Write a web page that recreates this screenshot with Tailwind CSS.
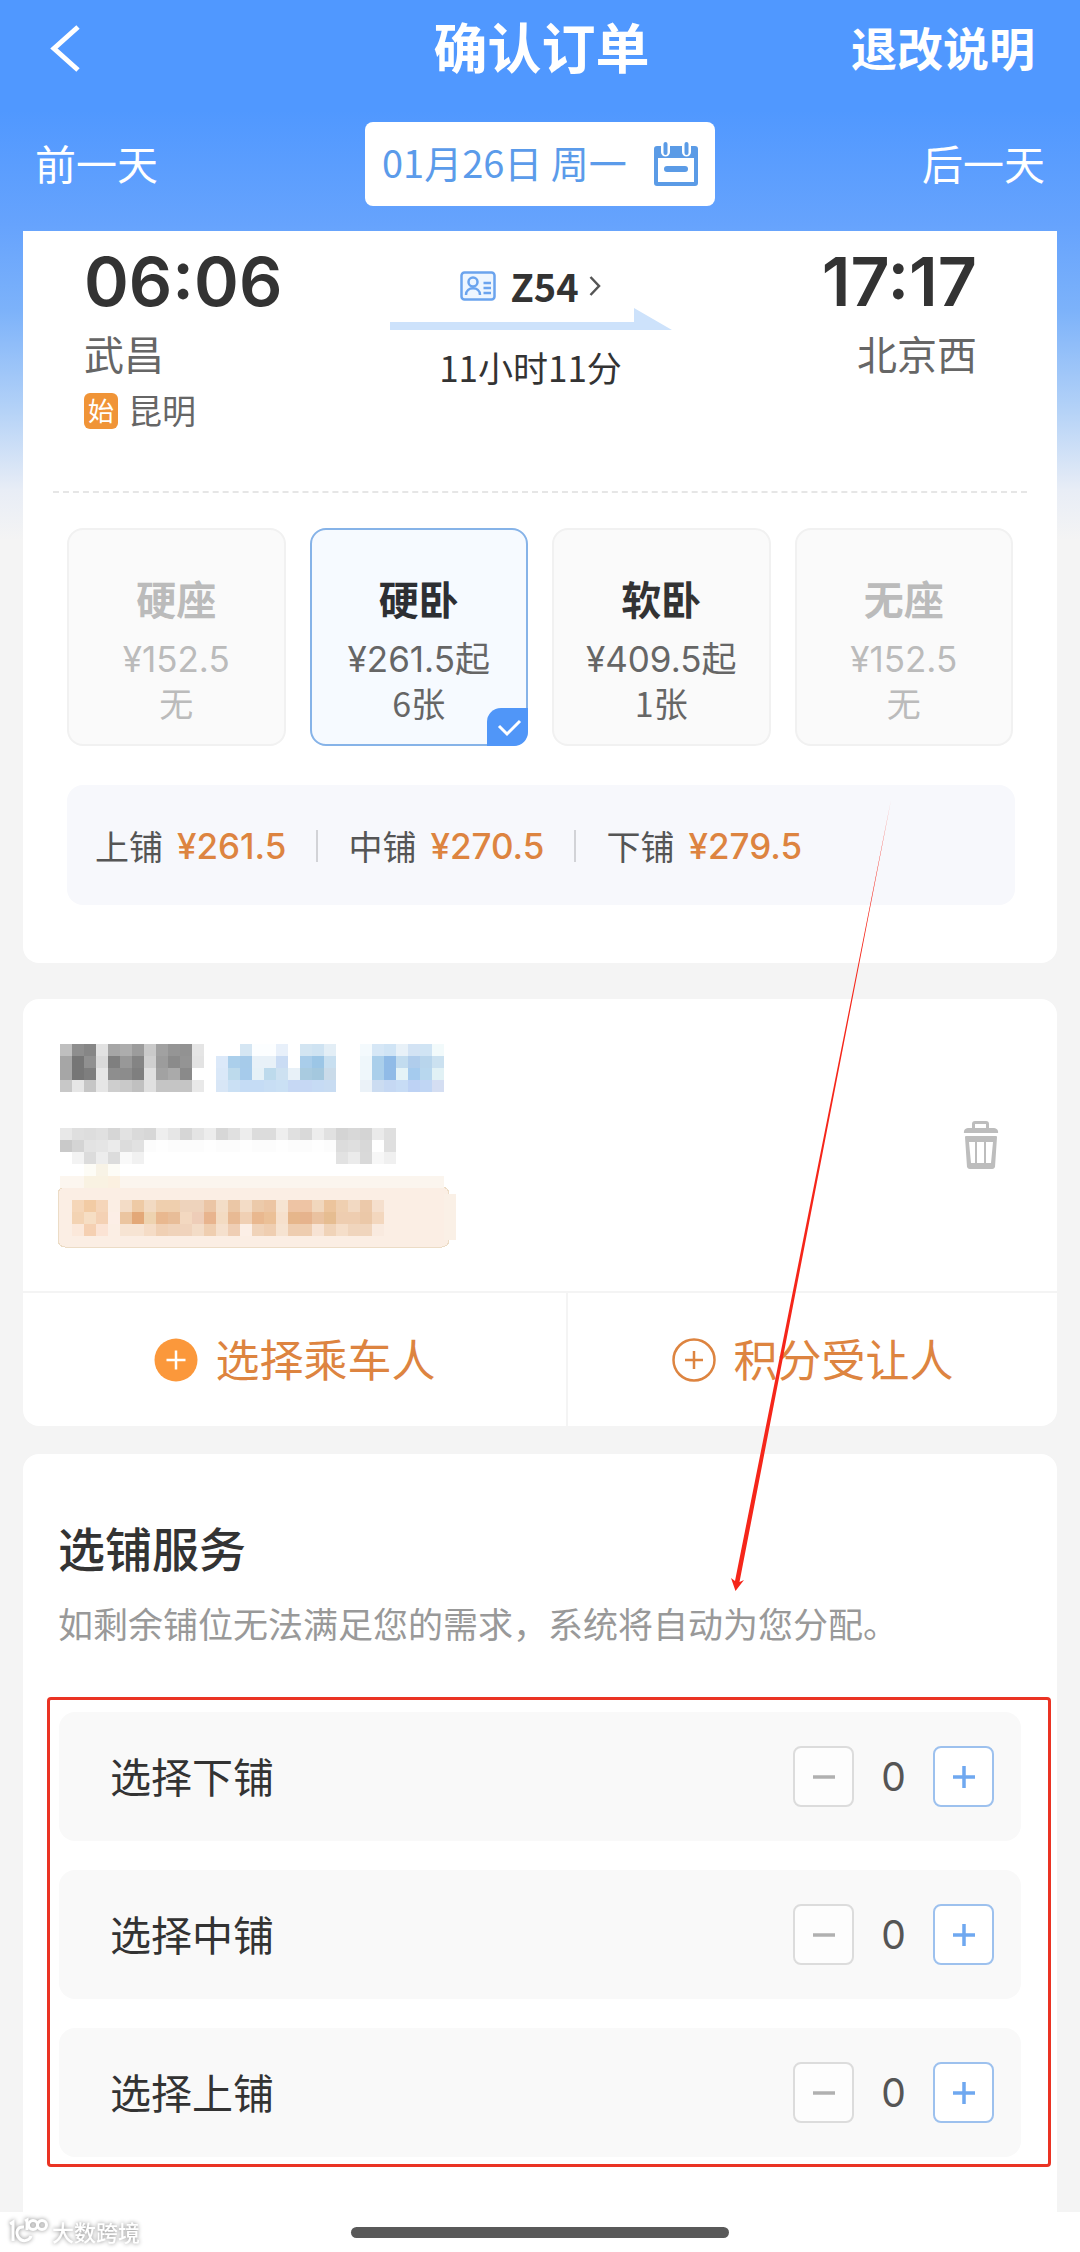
<!DOCTYPE html>
<html lang="zh-CN">
<head>
<meta charset="utf-8">
<meta name="viewport" content="width=device-width, initial-scale=1">
<title>确认订单</title>
<script src="https://cdn.jsdelivr.net/npm/@tailwindcss/browser@4"></script>
</head>
<body class="bg-white font-['Noto_Sans_CJK_SC',sans-serif] text-[#333]">
<div class="relative overflow-hidden">
<div class="bg-[#f4f4f4]">
  <div class="bg-[linear-gradient(to_bottom,#5098ff_0px,#5098ff_110px,#66a3fd_225px,#7cb2fa_310px,#b4d2f7_410px,#e8edf6_490px,#f4f4f4_540px)]">
  <header class="text-white">
    <div class="grid h-[96px] grid-cols-3 items-center pr-[45px] pl-[48px]">
      <button aria-label="返回" class="justify-self-start">
        <svg class="h-[48px] w-[36px]" viewBox="0 0 36 48" fill="none" stroke="currentColor" stroke-width="5"><path d="M30 3L6 24.500L30 46"/></svg>
      </button>
      <h1 class="justify-self-center pb-1 text-[54px] leading-[64px] font-bold whitespace-nowrap">确认订单</h1>
      <a href="#" class="justify-self-end pb-1 text-[46px] leading-[64px] font-bold whitespace-nowrap">退改说明</a>
    </div>
    <div class="grid grid-cols-3 items-center px-[35px] pt-[26px] pb-[25px]">
      <button class="justify-self-start pb-1 text-[41px] leading-[60px]">前一天</button>
      <button class="flex h-[84px] w-[350px] items-center justify-between justify-self-center rounded-lg bg-white px-[17px] text-[38px] leading-[60px] whitespace-nowrap text-[#5b9bea]">
        <span class="pb-1">01月26日 周一</span>
        <svg class="h-[44px] w-[44px]" viewBox="0 0 44 44"><path fill="#5b9be6" fill-rule="evenodd" d="M3 4H7V10a4.500 4.500 0 0 0 9 0V4H28V10a4.500 4.500 0 0 0 9 0V4H41a3 3 0 0 1 3 3V41a3 3 0 0 1-3 3H3a3 3 0 0 1-3-3V7a3 3 0 0 1 3-3ZM4 16V40H40V16Z"/><path d="M11.500 2v9M32.500 2v9" stroke="#5b9be6" stroke-width="4" stroke-linecap="round"/><path d="M13 27H31" stroke="#5b9be6" stroke-width="6" stroke-linecap="round"/></svg>
      </button>
      <button class="justify-self-end pb-1 text-[41px] leading-[60px]">后一天</button>
    </div>
  </header>

  <section class="mx-[23px] rounded-b-2xl bg-white px-[30px] pb-[58px]">
    <div class="grid grid-cols-[1fr_auto_1fr] border-b-2 border-dashed border-[#e6e6e6] pt-[8px] pr-[50px] pb-[54px] pl-[31px]">
      <div>
        <div class="font-[Inter,sans-serif] text-[68px] leading-[84px] font-semibold">06:06</div>
        <div class="text-[40px] leading-[60px] text-[#666]">武昌</div>
        <div class="mt-[2px] flex items-center gap-[10px] text-[34px] leading-[52px] text-[#666]"><span class="flex h-[36px] w-[34px] items-center justify-center rounded-md bg-[#f09437] pb-[2px] text-[26px] leading-[34px] text-white">始</span><span class="pb-[2px] leading-[50px]">昆明</span></div>
      </div>
      <div class="flex flex-col items-center pt-[25px]">
        <button class="flex items-center gap-[14px] text-[38px] leading-[44px] font-bold">
          <svg class="h-[30px] w-[36px]" viewBox="0 0 36 30" fill="none" stroke="#6ba4ee" stroke-width="2.500"><rect x="1.500" y="1.500" width="33" height="27" rx="3" fill="#eef6ff"/><circle cx="13" cy="11" r="4.500"/><path d="M6 24C6 15 20 15 20 24M23.500 12H31M23.500 17H31M23.500 22H31"/></svg>
          Z54
          <svg class="-ml-[4px] h-[22px] w-[12px]" viewBox="0 0 12 22" fill="none" stroke="#555" stroke-width="2.500"><path d="M1.500 2L10 11L1.500 20"/></svg>
        </button>
        <svg class="h-[22px] w-[282px]" viewBox="0 0 282 22" fill="#cde2fb"><path d="M0 14H244V0L282 22H0Z"/></svg>
        <div class="mt-[12px] text-[35px] leading-[50px]">11小时11分</div>
      </div>
      <div class="text-right">
        <div class="font-[Inter,sans-serif] text-[68px] leading-[84px] font-semibold">17:17</div>
        <div class="text-[40px] leading-[60px] text-[#666]">北京西</div>
      </div>
    </div>

    <div class="mx-[14px] mt-[35px] grid grid-cols-4 gap-[24px] text-[34px] leading-[44px]">
      <button disabled class="h-[218px] rounded-2xl border-2 border-[#f1f1f1] bg-[#fafafa] pt-[18px] text-[#bbb]">
        <div class="mb-[9px] text-[40px] leading-[60px] font-bold">硬座</div><div class="font-[Inter,'Noto_Sans_CJK_SC',sans-serif] text-[35px]">¥152.5</div><div>无</div>
      </button>
      <button aria-pressed="true" class="relative h-[218px] rounded-2xl border-2 border-[#86b3e8] bg-[#f6faff] pt-[18px] text-[#666]">
        <div class="mb-[9px] text-[40px] leading-[60px] font-bold text-[#2d2f33]">硬卧</div><div class="font-[Inter,'Noto_Sans_CJK_SC',sans-serif] text-[35px]">¥261.5起</div><div>6张</div>
        <svg class="absolute -right-[2px] -bottom-[2px] h-[38px] w-[41px]" viewBox="0 0 41 38" fill="none"><path fill="#5096f8" d="M14 0H41V24A14 14 0 0 1 27 38H0V14A14 14 0 0 1 14 0Z"/><path d="M12 18L20 26L33 13" stroke="#fff" stroke-width="3"/></svg>
      </button>
      <button class="h-[218px] rounded-2xl border-2 border-[#f1f1f1] bg-[#fafafa] pt-[18px] text-[#666]">
        <div class="mb-[9px] text-[40px] leading-[60px] font-bold text-[#333]">软卧</div><div class="font-[Inter,'Noto_Sans_CJK_SC',sans-serif] text-[35px]">¥409.5起</div><div>1张</div>
      </button>
      <button disabled class="h-[218px] rounded-2xl border-2 border-[#f1f1f1] bg-[#fafafa] pt-[18px] text-[#bbb]">
        <div class="mb-[9px] text-[40px] leading-[60px] font-bold">无座</div><div class="font-[Inter,'Noto_Sans_CJK_SC',sans-serif] text-[35px]">¥152.5</div><div>无</div>
      </button>
    </div>

    <div class="mr-[12px] ml-[14px] mt-[39px] flex h-[120px] items-center rounded-2xl bg-[#f7f8fc] pt-[2px] pl-[28px] text-[34px] leading-[50px] whitespace-nowrap text-[#555]">
      <div class="flex gap-[14px] pr-[30px]">上铺<span class="font-[Inter,sans-serif] text-[35px] font-medium text-[#dd8440]">¥261.5</span></div>
      <div class="h-[32px] w-[2px] bg-[#d2d3d7]"></div>
      <div class="flex gap-[14px] px-[30px]">中铺<span class="font-[Inter,sans-serif] text-[35px] font-medium text-[#dd8440]">¥270.5</span></div>
      <div class="h-[32px] w-[2px] bg-[#d2d3d7]"></div>
      <div class="flex gap-[14px] pl-[30px]">下铺<span class="font-[Inter,sans-serif] text-[35px] font-medium text-[#dd8440]">¥279.5</span></div>
    </div>
  </section>
  </div>

  <section class="mx-[23px] mt-[36px] rounded-2xl bg-white">
    <div class="flex h-[292px] items-start justify-between pt-[45px] pr-[58px] pl-[35px]">
      <svg id="masked" class="h-[206px] w-[400px]" viewBox="0 0 400 206" shape-rendering="crispEdges" role="img" aria-label="乘车人信息已隐藏"></svg>
      <button aria-label="删除乘车人" class="mt-[76px]">
        <svg class="h-[50px] w-[36px]" viewBox="0 0 36 50" fill="#bdbdbd"><path fill-rule="evenodd" d="M9 8V4a3 3 0 0 1 3-3H23a3 3 0 0 1 3 3V8H31a4 4 0 0 1 4 5H1a4 4 0 0 1 4-5ZM12 8H23V4H12Z"/><path fill-rule="evenodd" d="M3 16H33a1 1 0 0 1 1 1L32 47a3 3 0 0 1-3 2H7a3 3 0 0 1-3-2L2 17a1 1 0 0 1 1-1ZM6 22L8 43H12V22ZM14 22V43H21V22ZM23 22V43H28L30 22Z"/></svg>
      </button>
    </div>
    <div class="flex border-t-2 border-[#f4f4f4] text-[44px] leading-[64px] text-[#dd8440]">
      <button class="flex h-[133px] grow basis-[56px] items-center justify-center gap-[18px] border-r-2 border-[#f4f4f4]">
        <svg class="h-[44px] w-[44px]" viewBox="0 0 44 44"><circle cx="22" cy="22" r="21.500" fill="#fb983b"/><path d="M12.500 22H31.500M22 12.500V31.500" stroke="#fff" stroke-width="2.500"/></svg><span class="pb-1">选择乘车人</span>
      </button>
      <button class="flex h-[133px] grow basis-0 items-center justify-center gap-[18px]">
        <svg class="h-[44px] w-[44px]" viewBox="0 0 44 44" fill="none" stroke="#dd8440" stroke-width="2.500"><circle cx="22" cy="22" r="20.500"/><path d="M13 22H31M22 13V31"/></svg><span class="pb-1">积分受让人</span>
      </button>
    </div>
  </section>

  <section class="mx-[23px] mt-[28px] rounded-t-2xl bg-white px-[24px] pt-[61px] pb-[45px]">
    <h2 class="px-[11px] text-[47px] leading-[64px] font-medium">选铺服务</h2>
    <p class="mt-[16px] px-[11px] text-[35px] leading-[56px] text-[#999]">如剩余铺位无法满足您的需求，系统将自动为您分配。</p>
    <div class="mt-[46px] -mr-[18px] flex flex-col gap-[29px] rounded-sm border-[3px] border-[#ea3323] pt-[12px] pr-[27px] pb-[7px] pl-[9px]">
      <div class="flex h-[129px] items-center justify-between rounded-2xl bg-[#f9f9f9] pr-[27px] pl-[51px]">
        <span class="pb-1 text-[41px] leading-[60px]">选择下铺</span>
        <div class="flex items-center">
          <button aria-label="减少下铺" disabled class="flex size-[61px] items-center justify-center rounded-lg border-2 border-[#dcdcdc] bg-[#fdfdfd]"><svg class="size-[22px]" viewBox="0 0 22 22"><path d="M0 11H22" stroke="#b0b0b0" stroke-width="3.500"/></svg></button>
          <output class="w-[79px] text-center font-[Inter,sans-serif] text-[39px] leading-[60px] text-[#555]">0</output>
          <button aria-label="增加下铺" class="flex size-[61px] items-center justify-center rounded-lg border-2 border-[#9dc1ee] bg-white"><svg class="size-[22px]" viewBox="0 0 22 22"><path d="M0 11H22M11 0V22" stroke="#6fa8f0" stroke-width="3.500"/></svg></button>
        </div>
      </div>
      <div class="flex h-[129px] items-center justify-between rounded-2xl bg-[#f9f9f9] pr-[27px] pl-[51px]">
        <span class="pb-1 text-[41px] leading-[60px]">选择中铺</span>
        <div class="flex items-center">
          <button aria-label="减少中铺" disabled class="flex size-[61px] items-center justify-center rounded-lg border-2 border-[#dcdcdc] bg-[#fdfdfd]"><svg class="size-[22px]" viewBox="0 0 22 22"><path d="M0 11H22" stroke="#b0b0b0" stroke-width="3.500"/></svg></button>
          <output class="w-[79px] text-center font-[Inter,sans-serif] text-[39px] leading-[60px] text-[#555]">0</output>
          <button aria-label="增加中铺" class="flex size-[61px] items-center justify-center rounded-lg border-2 border-[#9dc1ee] bg-white"><svg class="size-[22px]" viewBox="0 0 22 22"><path d="M0 11H22M11 0V22" stroke="#6fa8f0" stroke-width="3.500"/></svg></button>
        </div>
      </div>
      <div class="flex h-[129px] items-center justify-between rounded-2xl bg-[#f9f9f9] pr-[27px] pl-[51px]">
        <span class="pb-1 text-[41px] leading-[60px]">选择上铺</span>
        <div class="flex items-center">
          <button aria-label="减少上铺" disabled class="flex size-[61px] items-center justify-center rounded-lg border-2 border-[#dcdcdc] bg-[#fdfdfd]"><svg class="size-[22px]" viewBox="0 0 22 22"><path d="M0 11H22" stroke="#b0b0b0" stroke-width="3.500"/></svg></button>
          <output class="w-[79px] text-center font-[Inter,sans-serif] text-[39px] leading-[60px] text-[#555]">0</output>
          <button aria-label="增加上铺" class="flex size-[61px] items-center justify-center rounded-lg border-2 border-[#9dc1ee] bg-white"><svg class="size-[22px]" viewBox="0 0 22 22"><path d="M0 11H22M11 0V22" stroke="#6fa8f0" stroke-width="3.500"/></svg></button>
        </div>
      </div>
    </div>
  </section>
</div>

<footer class="relative flex h-[40px] justify-center bg-white pt-[15px]">
  <div class="h-[11px] w-[378px] rounded-full bg-[#595959]"></div>
  <div class="absolute top-[4px] left-[9px] flex items-center gap-[4px] text-[22px] leading-[30px] font-medium text-white drop-shadow-[0_0_2px_#888]">
    <svg class="h-[28px] w-[39px]" viewBox="0 0 39 28" fill="none" stroke="#fff" stroke-width="3"><path d="M1 7L4 5V24M15 10C8 9 6 16 10 21C14 26 21 23 22 19M16 4L18 3V13"/><circle cx="24" cy="8" r="4.500"/><circle cx="33" cy="8" r="4.500"/></svg>大数跨境
  </div>
</footer>

<svg class="pointer-events-none absolute top-[800px] left-[67%] h-[794px] w-[170px]" viewBox="0 0 170 794" fill="#f5261a" aria-hidden="true"><path d="M167 0L15.500 782L20 780L11.500 791L7 778L11 781Z"/></svg>
</div>

<script>
// Pixelated block-out of the passenger's details: [column, row, colours], 12px cells.
const strips = [
  [0,0,'bfbfbf 8e8e8e 868686 e2e2e2 a6a6a6 adadad 9c9c9c cacaca a1a1a1 959595 929292 e5e5e5'],
  [0,1,'a6a6a6 767676 909090 dadada 7f7f7f 989898 848484 d0d0d0 9c9c9c 8b8b8b 949494 e3e3e3'],
  [0,2,'a6a6a6 767676 7e7e7e e6e6e6 8e8e8e 8c8c8c 7f7f7f e0e0e0 a2a2a2 aaaaaa 8a8a8a ffffff'],
  [0,3,'c8c8c8 e6e6e6 c6c6c6 e6e6e6 cecece c9c9c9 c0c0c0 e0e0e0 c5c5c5 c5c5c5 c5c5c5 e9e9e9'],
  [13,0,'ffffff ffffff d5e6f3 fcfeff fcfeff e8f0fa ffffff d3e5f2 cfe3f2 e3eef6'],
  [13,1,'dce9f9 abcfeb a6cbea e8f1f8 e8f1f8 cadcf4 ffffff a9cdea 9cc6e6 c8dff0'],
  [13,2,'dae8f8 bddaec a6cbeb e6f1f7 bddaec cde1f1 e8f1f8 a9cbe0 a4c8de cadbe9'],
  [13,3,'d8e6f6 cae0f4 c5dcf5 c5dcf5 c8def4 cae0f4 c6d8f4 c6d8f4 c6dbf4 c8dcf2'],
  [25,0,'f4fafd d6e7f6 d0e4f5 e8f1f8 d3e3f4 d0e4f4 f2fafb'],
  [25,1,'eff7fb aacfeb 90bbe7 c2dcef b0cdec b8d5ec cbe1f0'],
  [25,2,'eff7fb aacfeb 90bbe7 e4f3f7 a5cbee b8d7ee e1f1f5'],
  [25,3,'ebf2f8 cbdcf1 c5d8f3 c7dcf5 bdd2f4 c0d6f4 d4def2'],
  [0,7,'e8e8e8 dfdfdf dddddd e0e0e0 d6d6d6 e2e2e2 dadada d7d7d7 eeeeee e6e6e6 d6d6d6 e4e4e4 ededed d7d7d7 e0e0e0 ededed dcdcdc dcdcdc eeeeee e0e0e0 d9d9d9 ededed e1e1e1 d4d4d4 d8d8d8 d4d4d4 eaeaea dfdfdf'],
  [0,8,'c9c9c9 d4d4d4 e3e3e3 e5e5e5 ebebeb dcdcdc e1e1e1 fcfcfc fefefe fcfcfc fcfcfc fcfcfc fefefe fcfcfc fcfcfc fefefe fcfcfc fcfcfc fefefe fcfcfc fcfcfc fefefe fcfcfc dcdcdc dfdfdf d8d8d8 ffffff dfdfdf'],
  [1,9,'f3f3f3 dcdcdc ededed dcdcdc f9f9f9 f1f1f1'],
  [23,9,'e2e2e2 ebebeb d9d9d9 f7f7f7 f0f0f0'],
  [2,10,'fdfcf6 f8f3e6 fdfcf6'],
  [0,11,'fcf6ef fcf6ef f9f2e2 f9f2e2 fbf0e0 fbf5ee fbf5ee fbf5ee fbf5ee fbf5ee fbf5ee fbf5ee fbf5ee fbf5ee fbf5ee fbf5ee fbf5ee fbf5ee fbf5ee fbf5ee fbf5ee fbf5ee fbf5ee fbf5ee fbf5ee fbf5ee fbf5ee fbf5ee fbf5ee fbf5ee fbf5ee fbf5ee'],
  [1,13,'f5d6b8 f2cba4 f5d5b9 fbeee4 f3dcc6 eecaa5 f2dac2 efcfae efcfae eed3bc eed3bc ebc5a5 f3ddc7 ebc7a6 f3dcc6 eccaaa ecc5a3 f6e4d2 eec4a4 eec4a4 f1d7bd ecc49c efcfb0 f2d9c2 ecc9aa f5dfcd'],
  [1,14,'f3d3b3 f6dec4 f4d1b4 fceee6 ebc5a0 e3a878 eed3b0 e9b88f e8bd98 f3d8c0 eecdb8 e8b48e f3dbc2 e8ba94 f0d0b4 e9b88f ebc097 f6e0cc e6b68b e6b38d eac2a0 e6bd91 eecdb0 eecdb0 ebc8a8 f3d7be'],
  [1,15,'fbe8da f5d0b2 fbe3d4 fbeee4 f7e4d3 f7e4d3 f5dcc6 f0d0b4 f0d3ba f0d3bc f3dcc7 efceb0 f5e0cd efceb4 fcefe6 f0d3b9 efceb1 f6e3d1 eecdb0 eecdb0 f7e3d4 f0d3b8 f5dec9 f0d5bd f0d5bd f9eadf']
];
let cells = '<rect x="0" y="143" width="391" height="60" rx="7" fill="#fbeee4" stroke="#ecdcc6"/><rect x="386" y="150" width="12" height="46" fill="#faf0e6"/>';
for (const [col, row, colours] of strips)
  colours.split(' ').forEach((c, i) => { cells += `<rect x="${2 + (col + i) * 12}" y="${row * 12}" width="12" height="12" fill="#${c}"/>`; });
document.getElementById('masked').innerHTML = cells;
</script>
</body>
</html>
